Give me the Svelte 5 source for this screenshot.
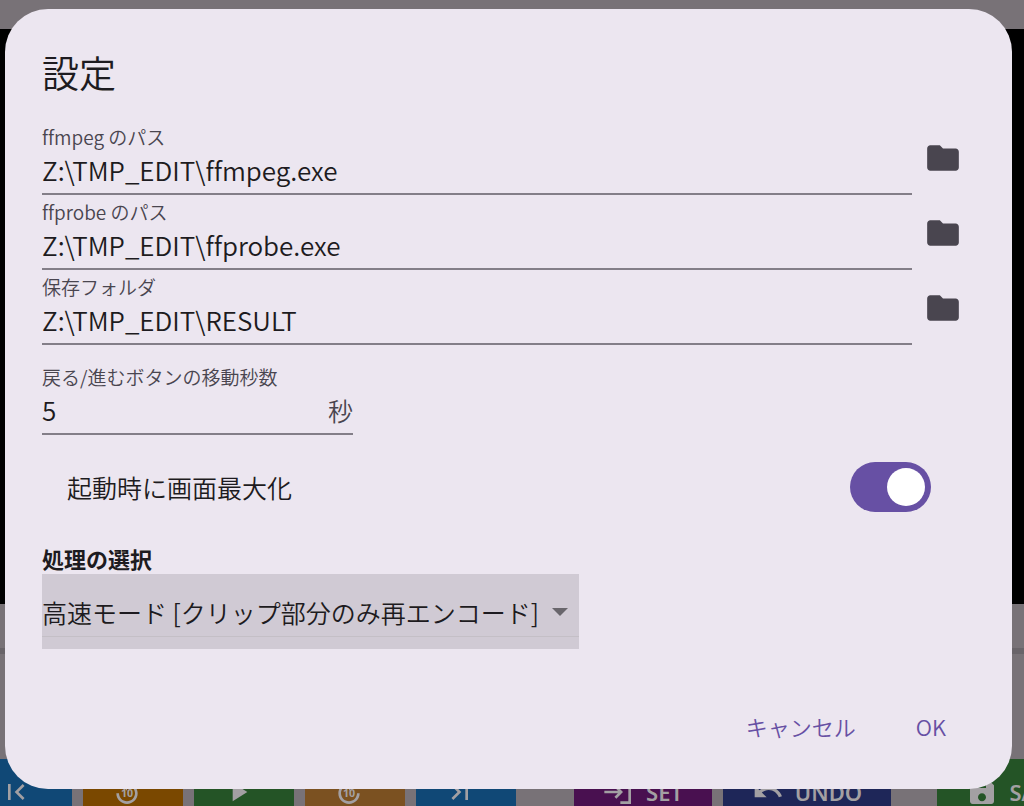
<script>
    let paths = $state([
        { id: 'ffmpeg', label: 'ffmpeg のパス', value: 'Z:\\TMP_EDIT\\ffmpeg.exe' },
        { id: 'ffprobe', label: 'ffprobe のパス', value: 'Z:\\TMP_EDIT\\ffprobe.exe' },
        { id: 'result', label: '保存フォルダ', value: 'Z:\\TMP_EDIT\\RESULT' }
    ]);
    let seconds = $state('5');
    let maximize = $state(true);
    let mode = $state('fast');
    let open = $state(true);

    const icons = {
        first: 'M18.41 16.59 13.82 12l4.59-4.59L17 6l-6 6 6 6zM6 6h2v12H6z',
        last: 'M5.59 7.41 10.18 12l-4.59 4.59L7 18l6-6-6-6zM16 6h2v12h-2z',
        play: 'M8 5v14l11-7z',
        replay: 'M12 5V1L7 6l5 5V7c3.31 0 6 2.69 6 6s-2.69 6-6 6-6-2.69-6-6H4c0 4.42 3.58 8 8 8s8-3.58 8-8-3.58-8-8-8z',
        forward: 'M18 13c0 3.31-2.69 6-6 6s-6-2.69-6-6 2.69-6 6-6v4l5-5-5-5v4c-4.42 0-8 3.58-8 8s3.58 8 8 8 8-3.58 8-8z',
        set: 'M13 3h8v18h-8v-2h6V5h-6zM10 7l5 5-5 5-1.4-1.4 2.6-2.6H1v-2h10.2L8.6 8.4z',
        undo: 'M12.5 8c-2.65 0-5.05.99-6.9 2.6L2 7v9h9l-3.62-3.62c1.39-1.16 3.16-1.88 5.12-1.88 3.54 0 6.55 2.31 7.6 5.5l2.37-.78C21.08 11.03 17.15 8 12.5 8z',
        save: 'M17 3H5c-1.11 0-2 .9-2 2v14c0 1.1.89 2 2 2h14c1.1 0 2-.9 2-2V7zm-5 16c-1.66 0-3-1.34-3-3s1.34-3 3-3 3 1.34 3 3-1.34 3-3 3zm3-10H5V5h10z'
    };

    const transport = [
        { icon: 'first', color: 'blue', name: '先頭へ' },
        { icon: 'replay', color: 'orange', name: '戻る', num: '10' },
        { icon: 'play', color: 'green', name: '再生' },
        { icon: 'forward', color: 'amber', name: '進む', num: '10' },
        { icon: 'last', color: 'blue', name: '末尾へ' }
    ];
</script>

<div class="app">
    <div class="titlebar"></div>
    <div class="video"></div>
    <div class="seek"><div class="track"></div></div>
    <div class="toolbar">
        {#each transport as b}
            <button class="tool {b.color}" aria-label={b.name}>
                <svg class="icon" viewBox="0 0 24 24">
                    <path d={icons[b.icon]} />
                    {#if b.num}
                        <text x="12" y="16" text-anchor="middle">{b.num}</text>
                    {/if}
                </svg>
            </button>
        {/each}
        <button class="tool wide set">
            <svg class="icon" viewBox="0 0 24 24"><path d={icons.set} /></svg>SET
        </button>
        <button class="tool wide undo">
            <svg class="icon" viewBox="0 0 24 24"><path d={icons.undo} /></svg>UNDO
        </button>
        <button class="tool wide save">
            <svg class="icon" viewBox="0 0 24 24"><path d={icons.save} /></svg>SAVE
        </button>
    </div>
</div>

{#if open}
    <div class="overlay">
        <div class="dialog" role="dialog" aria-modal="true" aria-labelledby="title">
            <h1 id="title">設定</h1>

            {#each paths as p}
                <div class="row">
                    <div class="field">
                        <label for={p.id}>{p.label}</label>
                        <input id={p.id} type="text" bind:value={p.value} />
                    </div>
                    <button class="browse" aria-label="フォルダを選択">
                        <svg viewBox="0 0 24 24">
                            <path d="M10 4H4c-1.1 0-2 .9-2 2v12c0 1.1.9 2 2 2h16c1.1 0 2-.9 2-2V8c0-1.1-.9-2-2-2h-8z" />
                        </svg>
                    </button>
                </div>
            {/each}

            <div class="field seconds">
                <label for="seconds">戻る/進むボタンの移動秒数</label>
                <div class="suffixed">
                    <input id="seconds" type="text" inputmode="numeric" bind:value={seconds} />
                    <span>秒</span>
                </div>
            </div>

            <div class="switch-row">
                <label for="maximize">起動時に画面最大化</label>
                <input id="maximize" type="checkbox" role="switch" bind:checked={maximize} />
            </div>

            <label class="mode-label" for="mode">処理の選択</label>
            <div class="mode">
                <div class="select">
                    <select id="mode" bind:value={mode}>
                        <option value="fast">高速モード [クリップ部分のみ再エンコード]</option>
                    </select>
                    <span class="arrow"></span>
                </div>
            </div>

            <div class="actions">
                <button onclick={() => (open = false)}>キャンセル</button>
                <button onclick={() => (open = false)}>OK</button>
            </div>
        </div>
    </div>
{/if}

<style>
    :global(body) {
        margin: 0;
        overflow: hidden;
        background: #787277;
    }

    .app, .overlay {
        font-family: "Noto Sans CJK JP DemiLight", "Noto Sans CJK JP", sans-serif;
        font-weight: 350;
        font-variant-ligatures: none;
        box-sizing: border-box;
        height: 100vh;
    }

    .app {
        display: flex;
        flex-direction: column;
        overflow: hidden;
        background: #787277;
    }

    .titlebar { height: 29px; flex: none; }
    .video { flex: 1; background: #000; }

    .seek {
        flex: none;
        height: 111px;
        padding-top: 44px;
        box-sizing: content-box;
    }
    .track { height: 6px; background: #696469; }

    .toolbar {
        flex: none;
        display: flex;
        gap: 11px;
        height: 47px;
        margin-left: -28px;
    }

    .tool {
        flex: none;
        display: flex;
        align-items: center;
        width: 100px;
        height: 66px;
        padding: 0 12px 0 0;
        justify-content: center;
        border: none;
        color: #a3a0a3;
        font: 600 22px/32px "Noto Sans", sans-serif;
    }
    .wide { gap: 11px; padding: 0; }

    .icon { width: 32px; height: 32px; fill: currentColor; flex: none; }
    .icon text { font-size: 8px; font-weight: 700; }

    .blue { background: #104876; }
    .orange { background: #7a4800; }
    .green { background: #245426; }
    .amber { background: #7b5121; }
    .set { background: #491050; width: 138px; margin-left: 47px; }
    .undo { background: #1e2658; width: 168px; }
    .save { background: #245426; width: 154px; margin-left: 35px; }

    .overlay {
        position: fixed;
        inset: 0;
        display: flex;
        padding: 9px 12px 17px 5px;
    }

    .dialog {
        flex: 1;
        display: flex;
        flex-direction: column;
        box-sizing: border-box;
        padding: 35px 37px 33px;
        border-radius: 43px;
        background: #ece6f0;
        color: #1d1b20;
    }

    h1 {
        margin: 0 0 20px;
        font-size: 37px;
        font-weight: inherit;
        line-height: 56px;
    }

    .row { display: flex; padding-right: 1px; }

    .field {
        flex: 1;
        display: flex;
        flex-direction: column;
        box-sizing: border-box;
        height: 75px;
        padding-top: 3px;
        border-bottom: 2px solid #837e88;
    }
    .field label {
        font-size: 19px;
        line-height: 28px;
        color: #49454f;
    }

    input[type="text"] {
        width: 100%;
        min-width: 0;
        height: 38px;
        padding: 0;
        border: none;
        outline: none;
        background: none;
        color: inherit;
        font: inherit;
        font-size: 26px;
        line-height: 38px;
    }

    .browse {
        width: 62px;
        height: 75px;
        padding: 0;
        border: none;
        background: none;
        cursor: pointer;
    }
    .browse svg { display: block; width: 38px; height: 38px; margin: auto; fill: #49454f; }

    .seconds { flex: none; width: 311px; margin-top: 15px; }
    .suffixed { display: flex; }
    .suffixed span { font-size: 25px; line-height: 38px; color: #49454f; }

    .switch-row {
        display: flex;
        align-items: center;
        justify-content: space-between;
        margin-top: 27px;
        padding: 0 44px 0 25px;
        font-size: 25px;
        line-height: 50px;
    }

    input[type="checkbox"] {
        appearance: none;
        display: flex;
        box-sizing: border-box;
        width: 81px;
        height: 50px;
        margin: 0;
        padding: 6px;
        border-radius: 25px;
        background: #aaa4b0;
        cursor: pointer;
    }
    input[type="checkbox"]::before {
        content: "";
        width: 38px;
        height: 38px;
        border-radius: 50%;
        background: #fff;
    }
    input[type="checkbox"]:checked { justify-content: flex-end; background: #6750a4; }

    .mode-label {
        margin-top: 31px;
        margin-bottom: 1px;
        font-family: "Noto Sans CJK JP", sans-serif;
        font-size: 22px;
        font-weight: 700;
        line-height: 30px;
    }

    .mode {
        align-self: flex-start;
        padding-bottom: 12px;
        background: #d0cad4;
    }
    .select {
        display: grid;
        align-items: center;
        border-bottom: 1px solid #c4bfc6;
    }
    .select > * { grid-area: 1 / 1; }
    select {
        appearance: none;
        width: 537px;
        height: 62px;
        padding: 14px 30px 0 0;
        border: none;
        outline: none;
        background: none;
        color: inherit;
        font: inherit;
        font-size: 25px;
        line-height: 40px;
    }
    .arrow {
        justify-self: end;
        margin: 14px 11px 0 0;
        border: 8px solid transparent;
        border-top-color: #69666c;
        border-bottom: none;
        pointer-events: none;
    }

    .actions {
        display: flex;
        justify-content: flex-end;
        gap: 24px;
        margin-top: auto;
    }
    .actions button {
        padding: 0 18px;
        border: none;
        background: none;
        color: #6750a4;
        font: inherit;
        font-size: 22px;
        line-height: 60px;
        cursor: pointer;
    }
    .actions button:last-child { padding-right: 29px; }
</style>
